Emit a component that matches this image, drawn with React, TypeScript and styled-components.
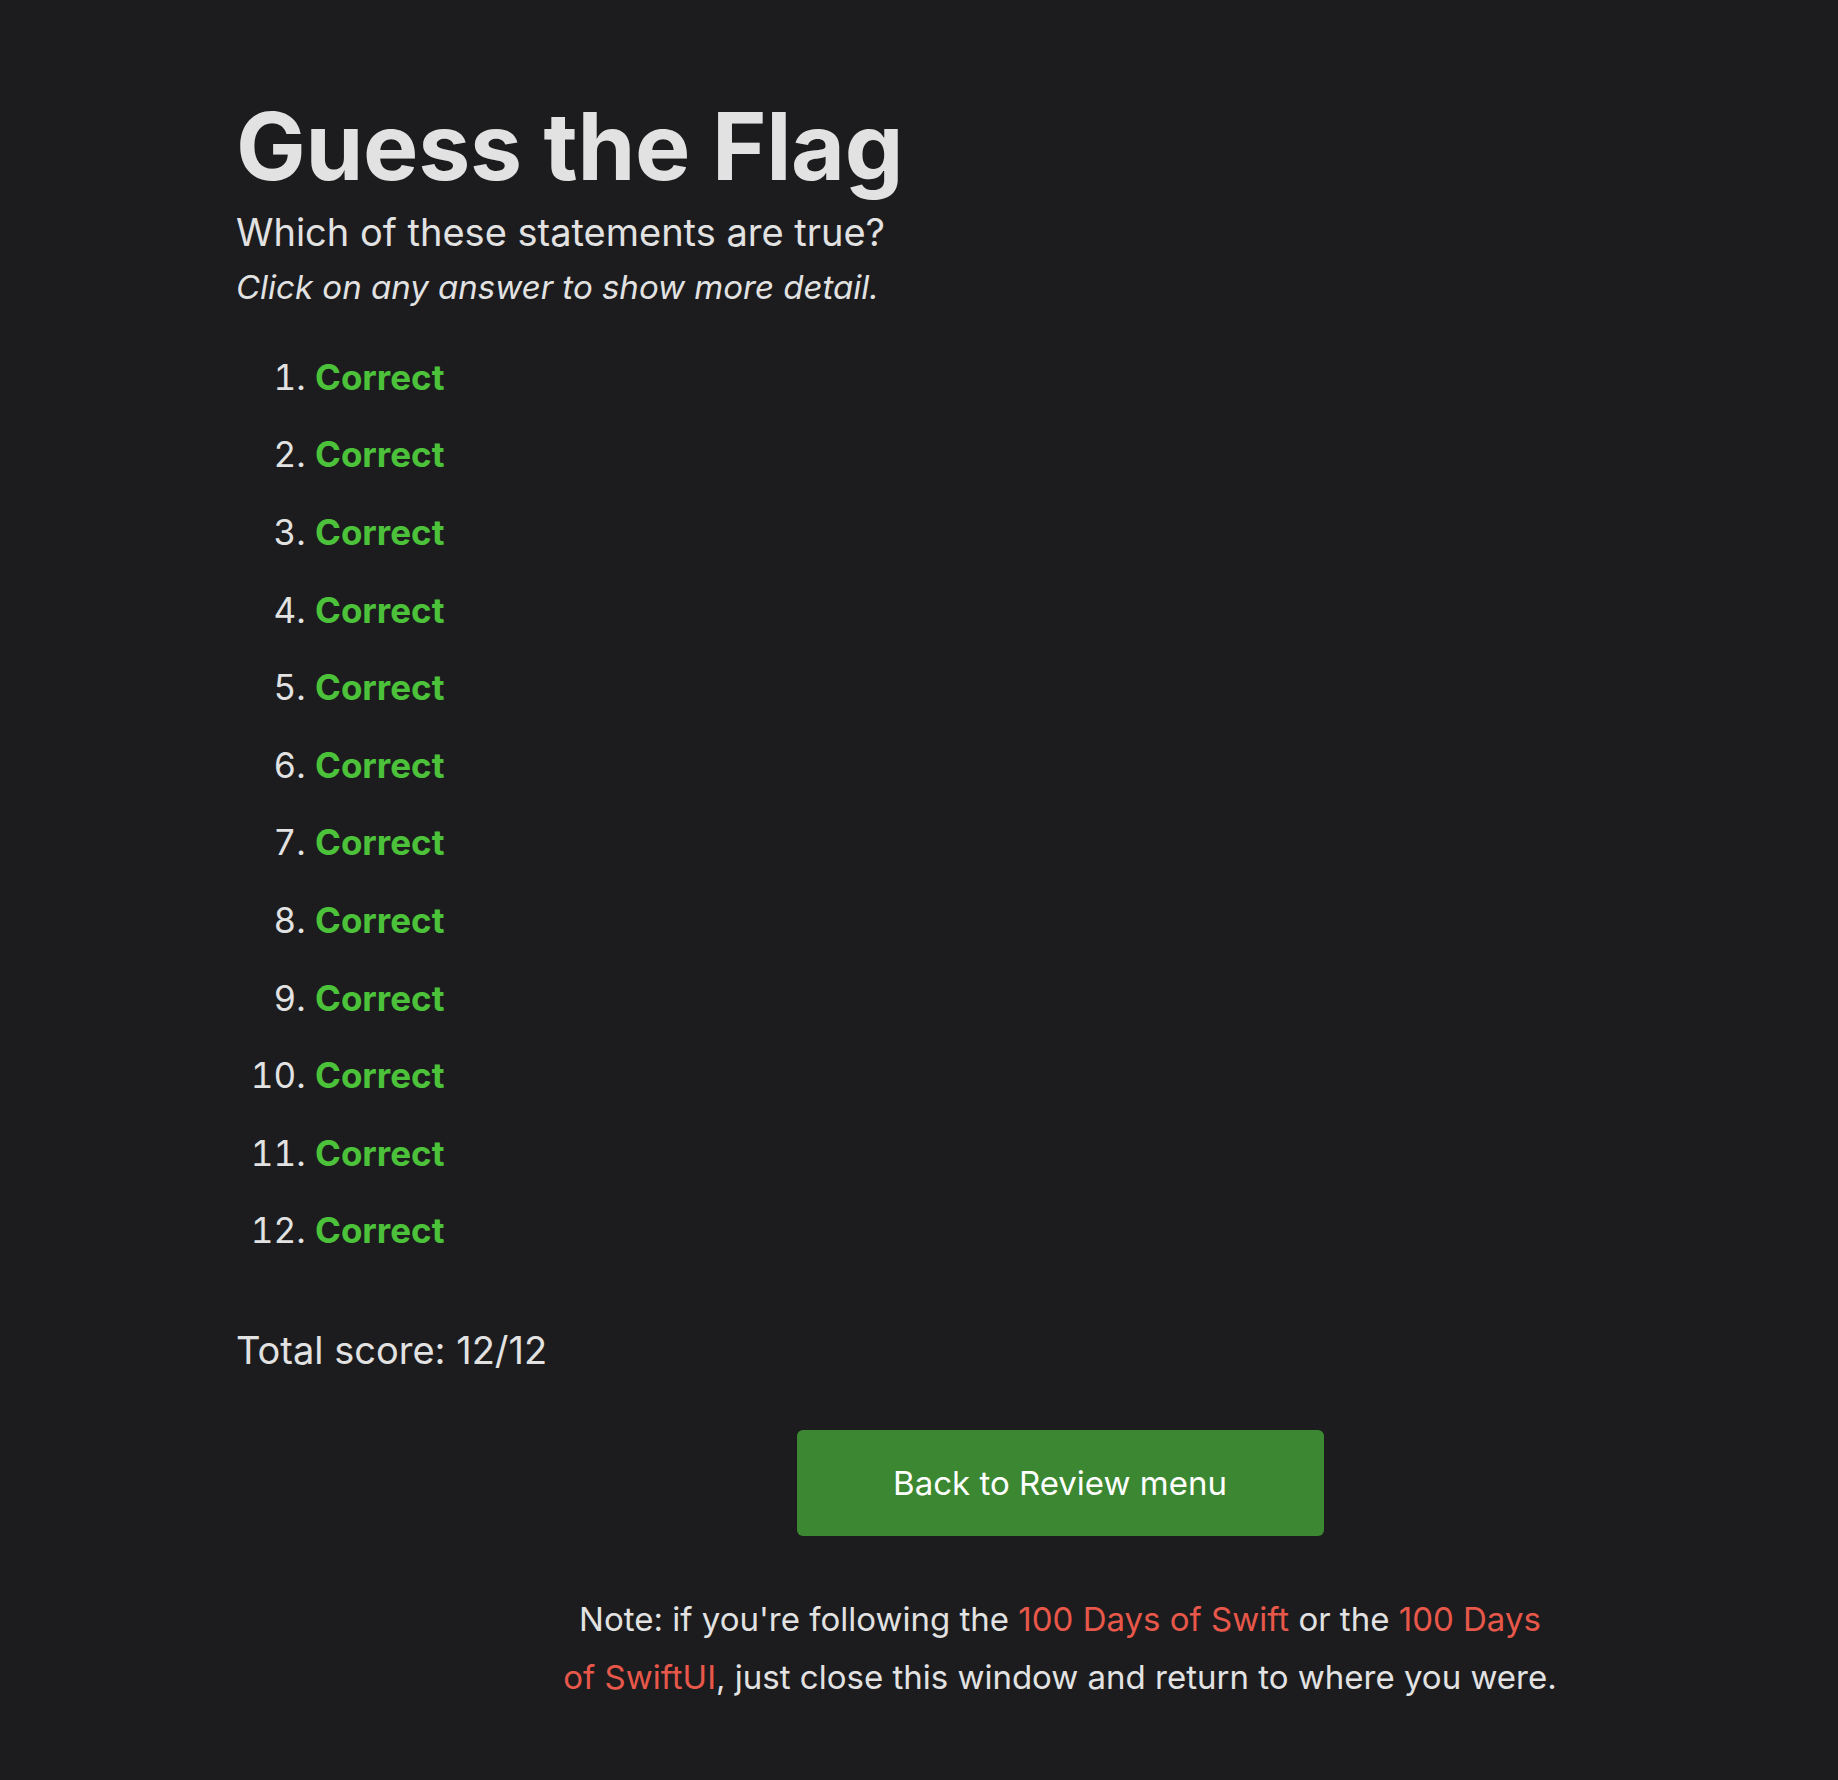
import React from "react";
import styled, { createGlobalStyle } from "styled-components";

const Global = createGlobalStyle`
  html, body { margin: 0; padding: 0; background: #1c1c1e; }
  body { font-family: Inter, "Noto Sans", "Liberation Sans", sans-serif; color: #e2e2e2; }
`;

const Page = styled.main`
  min-height: 1780px;
  box-sizing: border-box;
  padding: 91px 0 0 236px;
`;

const Title = styled.h1`
  margin: 0;
  font-size: 93px;
  font-weight: 700;
  line-height: 1.2;
  letter-spacing: -0.3px;
  color: #e2e2e2;
`;

const Subtitle = styled.p`
  margin: 5px 0 0;
  font-size: 38px;
  line-height: 1.3;
  font-weight: 400;
`;

const Hint = styled.p`
  margin: 9px 0 0;
  font-size: 33px;
  font-style: italic;
  line-height: 1.3;
`;

const List = styled.ol`
  margin: 30px 0 0;
  padding: 0 0 0 79px;
  font-size: 35px;
  li::marker { color: #e2e2e2; }
`;

const Item = styled.li`
  height: 77.6px;
  line-height: 77.6px;
`;

const Status = styled.span<{ $correct: boolean }>`
  font-weight: 700;
  color: ${(p) => (p.$correct ? "#4cc13a" : "#e8584a")};
`;

const Score = styled.p`
  margin: 56px 0 0;
  font-size: 38px;
  line-height: 1.3;
`;

const Footer = styled.section`
  width: 1200px;
  margin: 55px 0 0 224px;
  display: flex;
  flex-direction: column;
  align-items: center;
`;

const Button = styled.button`
  width: 527px;
  height: 106px;
  border: none;
  border-radius: 6px;
  background: #3c8731;
  color: #ffffff;
  font-family: inherit;
  font-size: 33px;
  cursor: pointer;
`;

const Note = styled.p`
  margin: 55px 0 0;
  max-width: 1000px;
  text-align: center;
  font-size: 33px;
  line-height: 57.4px;
`;

const Link = styled.a`
  color: #e8584a;
  text-decoration: none;
`;

export default function App() {
  const items = Array.from({ length: 12 }, (_, i) => i + 1);
  return (
    <>
      <Global />
      <Page>
        <Title>Guess the Flag</Title>
        <Subtitle>Which of these statements are true?</Subtitle>
        <Hint>Click on any answer to show more detail.</Hint>
        <List>
          {items.map((n) => (
            <Item key={n}>
              <Status $correct>Correct</Status>
            </Item>
          ))}
        </List>
        <Score>Total score: 12/12</Score>
        <Footer>
          <Button>Back to Review menu</Button>
          <Note>
            Note: if you're following the <Link href="#">100 Days of Swift</Link> or the{" "}
            <Link href="#">100 Days of SwiftUI</Link>, just close this window and return to where you were.
          </Note>
        </Footer>
      </Page>
    </>
  );
}
